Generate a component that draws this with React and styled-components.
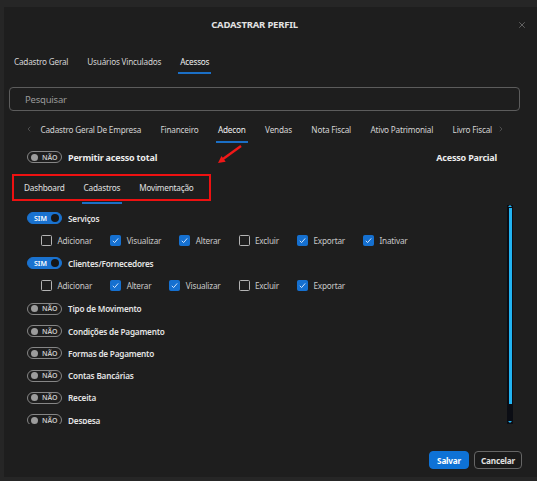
import React from "react";
import styled, { createGlobalStyle } from "styled-components";
import { X, ChevronLeft, ChevronRight } from "lucide-react";

const GlobalStyle = createGlobalStyle`
  html, body {
    margin: 0;
    padding: 0;
    background: #262626;
  }
  body {
    font-family: "Noto Sans", "Open Sans", sans-serif;
    letter-spacing: -0.2px;
    color: #e4e4e4;
  }
  * {
    box-sizing: border-box;
  }
`;

const services = [
  {
    name: "Serviços",
    on: true,
    perms: [
      ["Adicionar", false],
      ["Visualizar", true],
      ["Alterar", true],
      ["Excluir", false],
      ["Exportar", true],
      ["Inativar", true],
    ],
  },
  {
    name: "Clientes/Fornecedores",
    on: true,
    perms: [
      ["Adicionar", false],
      ["Alterar", true],
      ["Visualizar", true],
      ["Excluir", false],
      ["Exportar", true],
    ],
  },
  { name: "Tipo de Movimento" },
  { name: "Condições de Pagamento" },
  { name: "Formas de Pagamento" },
  { name: "Contas Bancárias" },
  { name: "Receita" },
  { name: "Despesa" },
];

const modules = [
  "Cadastro Geral De Empresa",
  "Financeiro",
  "Adecon",
  "Vendas",
  "Nota Fiscal",
  "Ativo Patrimonial",
  "Livro Fiscal",
];

function Toggle({ on }) {
  return (
    <ToggleWrap $on={on}>
      {on ? (
        <>
          <span>SIM</span>
          <Knob $on />
        </>
      ) : (
        <>
          <Knob />
          <span>NÃO</span>
        </>
      )}
    </ToggleWrap>
  );
}

function Check({ label, checked }) {
  return (
    <CheckItem>
      <Box $checked={checked}>
        {checked && (
          <svg width="9" height="9" viewBox="0 0 9 9">
            <polyline points="1.8,4.8 3.6,6.6 7.2,2.4" fill="none" stroke="#cfe2fb" strokeWidth="1" />
          </svg>
        )}
      </Box>
      {label}
    </CheckItem>
  );
}

export default function App() {
  return (
    <Page>
      <GlobalStyle />
      <Modal>
        <Header>
          <Title>CADASTRAR PERFIL</Title>
          <CloseBtn>
            <X size={10} strokeWidth={1.5} />
          </CloseBtn>
        </Header>

        <MainTabs>
          <MainTab>Cadastro Geral</MainTab>
          <MainTab>Usuários Vinculados</MainTab>
          <MainTab $active>Acessos</MainTab>
        </MainTabs>

        <Search placeholder="Pesquisar" />

        <SubTabs>
          <Chevron>
            <ChevronLeft size={8} strokeWidth={1.5} />
          </Chevron>
          {modules.map((m) => (
            <SubTab key={m} $active={m === "Adecon"}>
              {m}
            </SubTab>
          ))}
          <Chevron>
            <ChevronRight size={8} strokeWidth={1.5} />
          </Chevron>
        </SubTabs>

        <AccessRow>
          <Toggle on={false} />
          <StrongLabel>Permitir acesso total</StrongLabel>
          <Partial>Acesso Parcial</Partial>
        </AccessRow>

        <Highlight>
          <InnerTab>Dashboard</InnerTab>
          <InnerTab $active>Cadastros</InnerTab>
          <InnerTab>Movimentação</InnerTab>
        </Highlight>

        <Body>
          <List>
            {services.map((s) => (
              <React.Fragment key={s.name}>
                <ToggleRow>
                  <Toggle on={!!s.on} />
                  <ItemLabel>{s.name}</ItemLabel>
                </ToggleRow>
                {s.perms && (
                  <CheckRow>
                    {s.perms.map(([p, c]) => (
                      <Check key={p} label={p} checked={c} />
                    ))}
                  </CheckRow>
                )}
              </React.Fragment>
            ))}
          </List>
          <ScrollTrack>
            <ArrowUp />
            <Thumb />
            <ArrowDown />
          </ScrollTrack>
        </Body>

        <Footer>
          <Button $primary>Salvar</Button>
          <Button>Cancelar</Button>
        </Footer>

        <Pointer width="30" height="24" viewBox="0 0 30 24">
          <line x1="27" y1="3" x2="9" y2="16" stroke="#f01818" strokeWidth="2.4" />
          <polygon points="4,20 11.7,18.7 7.5,13" fill="#f01818" />
        </Pointer>
      </Modal>
    </Page>
  );
}

// Layout

const Page = styled.div`
  width: 537px;
  height: 481px;
  overflow: hidden;
  padding: 7px 0 4px 4px;
`;

const Modal = styled.div`
  position: relative;
  width: 533px;
  height: 470px;
  background: #1e1e1e;
  padding: 0 15px 8px 5px;
  display: flex;
  flex-direction: column;
`;

// Header

const Header = styled.div`
  height: 38px;
  padding-top: 12px;
  display: flex;
  align-items: flex-start;
`;

const Title = styled.div`
  flex: 1;
  text-align: center;
  padding-right: 17px;
  font-size: 9.5px;
  line-height: 12px;
  font-weight: 700;
  color: #e2e2e2;
`;

const CloseBtn = styled.div`
  width: 10px;
  height: 12px;
  margin-right: -5px;
  display: flex;
  align-items: center;
  color: #8a8a8a;
`;

// Tabs

const MainTabs = styled.div`
  margin-top: 7px;
  padding-left: 3px;
  display: flex;
  gap: 15px;
`;

const MainTab = styled.div`
  padding: 4px 2px 4px;
  font-size: 8.2px;
  line-height: 12px;
  color: ${(p) => (p.$active ? "#f0f0f0" : "#d4d4d4")};
  border-bottom: 2px solid ${(p) => (p.$active ? "#1b6fc6" : "transparent")};
`;

const Search = styled.input`
  margin-top: 13px;
  height: 24px;
  width: calc(100% - 2px);
  border: 1px solid #5c5c5c;
  border-radius: 4px;
  background: #1e1e1e;
  padding: 0 15px;
  font-family: inherit;
  font-size: 9.5px;
  letter-spacing: -0.2px;
  color: #ddd;
  outline: none;
  &::placeholder {
    color: #9a9a9a;
  }
`;

const SubTabs = styled.div`
  margin-top: 11px;
  padding-left: 16px;
  display: flex;
  align-items: flex-start;
  gap: 15.5px;
`;

const Chevron = styled.div`
  height: 14px;
  margin: 0 -10px 0 0;
  display: flex;
  align-items: center;
  color: #7a7a7a;
  &:last-child {
    margin: 0 0 0 -12px;
  }
`;

const SubTab = styled.div`
  padding: 2px 2px 5px;
  font-size: 8.2px;
  line-height: 12px;
  white-space: nowrap;
  color: ${(p) => (p.$active ? "#f0f0f0" : "#d4d4d4")};
  border-bottom: 2px solid ${(p) => (p.$active ? "#1b6fc6" : "transparent")};
`;

// Access row

const AccessRow = styled.div`
  margin-top: 7px;
  height: 14px;
  padding-left: 18px;
  padding-right: 25px;
  display: flex;
  align-items: center;
  gap: 6px;
`;

const StrongLabel = styled.div`
  font-size: 9px;
  font-weight: 700;
  color: #ececec;
`;

const Partial = styled(StrongLabel)`
  margin-left: auto;
`;

const Highlight = styled.div`
  margin: 10px 0 0 3px;
  width: 199px;
  height: 27px;
  border: 2px solid #ee1111;
  padding-left: 10px;
  display: flex;
  align-items: center;
  gap: 19px;
`;

const InnerTab = styled.div`
  position: relative;
  font-size: 8.2px;
  line-height: 12px;
  color: #e0e0e0;
  &::after {
    content: "";
    display: ${(p) => (p.$active ? "block" : "none")};
    position: absolute;
    left: -2px;
    right: -2px;
    bottom: -10px;
    height: 2px;
    background: #1b6fc6;
  }
`;

// Permission list

const Body = styled.div`
  margin-top: 4px;
  height: 219px;
  margin-right: 9px;
  display: flex;
`;

const List = styled.div`
  flex: 1;
  overflow: hidden;
  padding-top: 2px;
`;

const ToggleRow = styled.div`
  height: 22.3px;
  padding-left: 18px;
  display: flex;
  align-items: center;
  gap: 6px;
`;

const ItemLabel = styled.div`
  font-size: 8.2px;
  font-weight: 600;
  color: #e4e4e4;
`;

const CheckRow = styled.div`
  height: 20px;
  margin: 1px 0 2px;
  padding-left: 32px;
  display: flex;
  align-items: center;
  gap: 18px;
`;

const CheckItem = styled.div`
  display: flex;
  align-items: center;
  gap: 5.5px;
  font-size: 8.2px;
  color: #c9c9c9;
`;

const Box = styled.div`
  width: 11px;
  height: 11px;
  border-radius: 1.5px;
  border: 1px solid ${(p) => (p.$checked ? "#1570d0" : "#b4b4b4")};
  background: ${(p) => (p.$checked ? "#1570d0" : "transparent")};
  display: flex;
  align-items: center;
  justify-content: center;
`;

const ToggleWrap = styled.div`
  width: 35px;
  height: 12px;
  border-radius: 6px;
  flex-shrink: 0;
  display: flex;
  align-items: center;
  justify-content: ${(p) => (p.$on ? "space-between" : "flex-start")};
  gap: 4px;
  padding: 0 2px 0 ${(p) => (p.$on ? "6px" : "3px")};
  background: ${(p) => (p.$on ? "#1a72cf" : "transparent")};
  border: 1px solid ${(p) => (p.$on ? "#1a72cf" : "#868686")};
  font-size: 7px;
  font-weight: 600;
  letter-spacing: 0;
  color: ${(p) => (p.$on ? "#ffffff" : "#c8c8c8")};
`;

const Knob = styled.div`
  width: ${(p) => (p.$on ? "8px" : "7px")};
  height: ${(p) => (p.$on ? "8px" : "7px")};
  border-radius: 50%;
  background: ${(p) => (p.$on ? "#161616" : "#9c9c9c")};
`;

const ScrollTrack = styled.div`
  width: 6px;
  background: #0b0d14;
  display: flex;
  flex-direction: column;
  align-items: center;
  padding: 0 0 1px;
`;

const ArrowUp = styled.div`
  width: 0;
  height: 0;
  border-left: 2px solid transparent;
  border-right: 2px solid transparent;
  border-bottom: 2px solid #22b4f2;
`;

const Thumb = styled.div`
  margin-top: 1px;
  width: 3px;
  height: 196px;
  background: #22b4f2;
`;

const ArrowDown = styled.div`
  margin-top: auto;
  width: 0;
  height: 0;
  border-left: 2px solid transparent;
  border-right: 2px solid transparent;
  border-top: 2px solid #22b4f2;
`;

// Footer

const Footer = styled.div`
  margin-top: auto;
  display: flex;
  justify-content: flex-end;
  gap: 5px;
`;

const Button = styled.div`
  height: 18px;
  padding: 0 ${(p) => (p.$primary ? "7px" : "6px")};
  border-radius: 4px;
  display: flex;
  align-items: center;
  font-size: 8.2px;
  font-weight: 700;
  color: ${(p) => (p.$primary ? "#ffffff" : "#e0e0e0")};
  background: ${(p) => (p.$primary ? "#0e72d6" : "#1a1a1a")};
  border: 1px solid ${(p) => (p.$primary ? "#0e72d6" : "#666")};
`;

const Pointer = styled.svg`
  position: absolute;
  left: 210px;
  top: 136px;
`;
